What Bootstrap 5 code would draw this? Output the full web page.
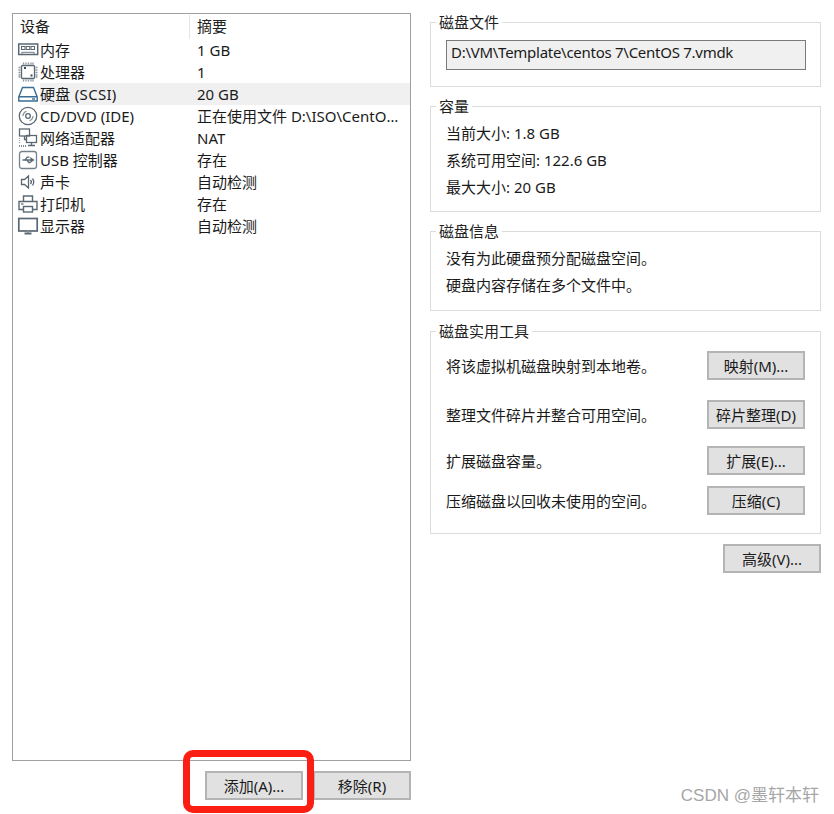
<!DOCTYPE html>
<html lang="zh-CN">
<head>
<meta charset="utf-8">
<title>虚拟机设置</title>
<link rel="stylesheet" href="https://cdn.jsdelivr.net/npm/bootstrap@5.3.0/dist/css/bootstrap.min.css">
<style>
html,body{height:814px;overflow:hidden;background:#fff}
body{font-family:"Noto Sans","Noto Sans CJK SC",sans-serif;font-size:15px;line-height:22px;color:#1a1a1a}
.vm-page{padding:13px 12px 0 12px;gap:19px;height:814px;position:relative}
.vm-left{width:399px;flex:none}
.vm-list{height:748px;border:1px solid #a0a0a0;background:#fff}
.vm-head{height:25px;padding-top:1px;color:#222}
.vm-c1{width:177px;flex:none;padding-left:7px}
.vm-c2{flex:1;min-width:0;padding-left:7px;white-space:nowrap;overflow:hidden}
.vm-head .vm-c1{border-right:1px solid #e5e5e5}
.vm-row{height:22px}
.vm-row .vm-c1{padding-left:4px;display:flex;align-items:center;gap:1px}
.vm-row svg{width:22px;height:22px;flex:none;fill:none;stroke:#5b6873;stroke-width:1.3}
.vm-sel .vm-c1 span,.vm-sel .vm-c2{background:#f0f0f0}
.vm-sel .vm-c1 span{flex:1;align-self:stretch;letter-spacing:.3px}
.vm-c2 .vm-ell{display:block;width:203px;overflow:hidden;text-overflow:ellipsis}
.vm-btn{background:#e1e1e1;border:2px solid #b4b4b4;border-radius:0;color:#1a1a1a;width:98px;height:29px;padding:0;font-size:15px;line-height:24px}
.vm-btn:hover{background:#e1e1e1;border-color:#b4b4b4;color:#1a1a1a}
.vm-foot{margin-top:10px;gap:10px}
.vm-right{width:391px;flex:none}
.vm-grp{border:1px solid #dcdcdc;padding:0 14px 0 15px;margin-bottom:9px;min-width:0}
.vm-grp legend{float:none;width:auto;font-size:15px;line-height:20px;margin:0 0 0 -10px;padding:0 3px;color:#222}
.vm-g1{height:75px;margin-top:-1px}
.vm-g2{height:116px}
.vm-g3{height:90px;margin-bottom:10px}
.vm-g4{height:213px;margin-bottom:10px}
.vm-path{height:30px;border:1px solid #7a7a7a;background:#f0f0f0;padding:0 4px;line-height:23px;margin-top:8px;letter-spacing:-.27px}
.vm-info{line-height:27px}
.vm-info:first-of-type{margin-top:4px}
.vm-tool{display:flex;align-items:center;justify-content:space-between}
.vm-tool .vm-btn{margin-right:1px}
.vm-t1{margin-top:10px}
.vm-t2{margin-top:20px}
.vm-t3{margin-top:17px}
.vm-t4{margin-top:11px}
.vm-mark{position:absolute;left:183px;top:750px;width:131px;height:63px;border:7px solid #fb1f13;border-radius:10px;pointer-events:none}
.vm-wm{position:absolute;right:15px;bottom:8px;color:#a6a6a6;font-size:17px;line-height:20px;font-family:"Liberation Sans","Noto Sans CJK SC",sans-serif}
</style>
</head>
<body>
<div class="vm-page d-flex">
  <div class="vm-left">
    <div class="vm-list">
      <div class="vm-head d-flex"><div class="vm-c1">设备</div><div class="vm-c2">摘要</div></div>
      <div class="vm-row d-flex"><div class="vm-c1"><svg viewBox="0 0 22 22"><rect x="1.700" y="5" width="19" height="10.500" stroke-width="1.500"/><path d="M5 15v-1.700h12v1.700" stroke="#8a949c"/><rect x="4.500" y="7.500" width="3.500" height="3" stroke-width="1"/><rect x="9.300" y="7.500" width="3.500" height="3" stroke-width="1"/><rect x="14" y="7.500" width="3.500" height="3" stroke-width="1"/></svg><span>内存</span></div><div class="vm-c2">1 GB</div></div>
      <div class="vm-row d-flex"><div class="vm-c1"><svg viewBox="0 0 22 22"><rect x="4.500" y="4.500" width="13" height="13" rx="1"/><path d="M6.500 1.500v2M9 1.500v2M11.500 1.500v2M14 1.500v2M16 1.500v2M6.500 18.500v2M9 18.500v2M11.500 18.500v2M14 18.500v2M16 18.500v2M1.500 6.500h2M1.500 9h2M1.500 11.500h2M1.500 14h2M1.500 16h2M18.500 6.500h2M18.500 9h2M18.500 11.500h2M18.500 14h2M18.500 16h2" stroke="#8a949c"/><path d="M7 7h2M13.500 14.500h2" stroke="#3d4750" stroke-width="1.800"/></svg><span>处理器</span></div><div class="vm-c2">1</div></div>
      <div class="vm-row vm-sel d-flex"><div class="vm-c1"><svg viewBox="0 0 22 22" style="stroke:#3d6d92"><path d="M5.500 4.500h11l3.700 9.500v4h-18.400v-4zM2 13.800h18" stroke-width="1.400"/><path d="M15 16h3" stroke-width="1.400"/></svg><span>硬盘 (SCSI)</span></div><div class="vm-c2">20 GB</div></div>
      <div class="vm-row d-flex"><div class="vm-c1"><svg viewBox="0 0 22 22"><circle cx="11" cy="11" r="8.700"/><circle cx="11" cy="11" r="2.300"/><path d="M6 11a5 5 0 0 1 3.500-4.700M16 11a5 5 0 0 1-3.500 4.700" stroke="#8a949c"/></svg><span>CD/DVD (IDE)</span></div><div class="vm-c2"><span class="vm-ell">正在使用文件 D:\ISO\CentOS-7-x86_64-DVD.iso</span></div></div>
      <div class="vm-row d-flex"><div class="vm-c1"><svg viewBox="0 0 22 22"><rect x="2.500" y="2" width="10" height="7"/><rect x="9.500" y="8.500" width="10" height="7"/><path d="M14.500 15.500v3M11 18.500h7M7.500 9v3.500h2"/><path d="M2 19h7" stroke-dasharray="1 1"/><path d="M2.500 11v6" stroke="#a3abb1" stroke-dasharray="1 1"/></svg><span>网络适配器</span></div><div class="vm-c2">NAT</div></div>
      <div class="vm-row d-flex"><div class="vm-c1"><svg viewBox="0 0 22 22"><rect x="2.500" y="2.500" width="17" height="17" rx="2.500" stroke="#76828b"/><path d="M5.500 11h9M14 9.200l2.500 1.800-2.500 1.800z" fill="#5b6873"/><path d="M8 11l2.200-2.800h2.300M10 11l1.800 2.500h1.700"/></svg><span>USB 控制器</span></div><div class="vm-c2">存在</div></div>
      <div class="vm-row d-flex"><div class="vm-c1"><svg viewBox="0 0 22 22"><path d="M4.500 8.500h3l4-3.500v12l-4-3.500h-3zM13.500 9a3 3 0 0 1 0 4M15.500 7.500a6 6 0 0 1 0 7"/></svg><span>声卡</span></div><div class="vm-c2">自动检测</div></div>
      <div class="vm-row d-flex"><div class="vm-c1"><svg viewBox="0 0 22 22"><path d="M6.500 8.500v-5.500h9v5.500M6.500 16.500h-4.500v-8h18v8h-4.500" stroke-width="1.400"/><rect x="6.500" y="13.500" width="9" height="5.500" stroke-width="1.400"/><path d="M4 11h2.500"/></svg><span>打印机</span></div><div class="vm-c2">存在</div></div>
      <div class="vm-row d-flex"><div class="vm-c1"><svg viewBox="0 0 22 22"><rect x="1.800" y="3.500" width="18.400" height="12.500" stroke-width="1.700"/><path d="M7.500 18.500h7" stroke-width="2"/><path d="M11 16v2" stroke-width="2" stroke="#8a949c"/></svg><span>显示器</span></div><div class="vm-c2">自动检测</div></div>
    </div>
    <div class="vm-foot d-flex justify-content-end">
      <button type="button" class="btn vm-btn">添加(A)...</button>
      <button type="button" class="btn vm-btn">移除(R)</button>
    </div>
  </div>
  <div class="vm-right">
    <fieldset class="vm-grp vm-g1"><legend>磁盘文件</legend><div class="vm-path">D:\VM\Template\centos 7\CentOS 7.vmdk</div></fieldset>
    <fieldset class="vm-grp vm-g2"><legend>容量</legend><div class="vm-info">当前大小: 1.8 GB</div><div class="vm-info">系统可用空间: 122.6 GB</div><div class="vm-info">最大大小: 20 GB</div></fieldset>
    <fieldset class="vm-grp vm-g3"><legend>磁盘信息</legend><div class="vm-info">没有为此硬盘预分配磁盘空间。</div><div class="vm-info">硬盘内容存储在多个文件中。</div></fieldset>
    <fieldset class="vm-grp vm-g4"><legend>磁盘实用工具</legend>
      <div class="vm-tool vm-t1"><span>将该虚拟机磁盘映射到本地卷。</span><button type="button" class="btn vm-btn">映射(M)...</button></div>
      <div class="vm-tool vm-t2"><span>整理文件碎片并整合可用空间。</span><button type="button" class="btn vm-btn">碎片整理(D)</button></div>
      <div class="vm-tool vm-t3"><span>扩展磁盘容量。</span><button type="button" class="btn vm-btn">扩展(E)...</button></div>
      <div class="vm-tool vm-t4"><span>压缩磁盘以回收未使用的空间。</span><button type="button" class="btn vm-btn">压缩(C)</button></div>
    </fieldset>
    <div class="d-flex justify-content-end"><button type="button" class="btn vm-btn">高级(V)...</button></div>
  </div>
  <div class="vm-mark"></div>
  <div class="vm-wm">CSDN @墨轩本轩</div>
</div>
</body>
</html>
